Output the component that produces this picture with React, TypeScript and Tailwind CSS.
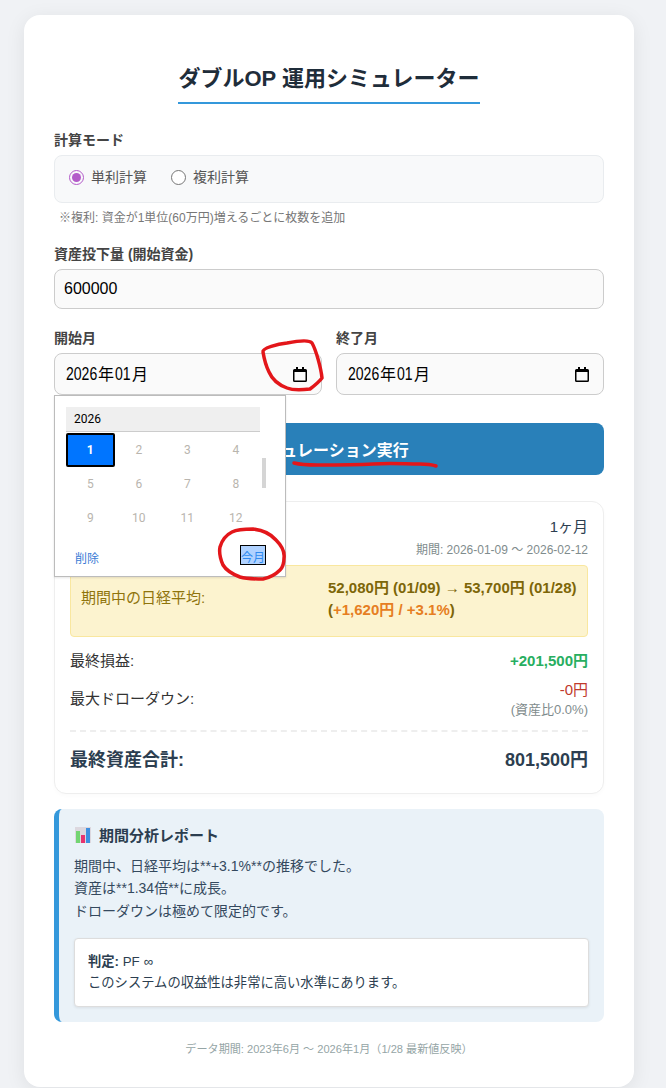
const months = [1, 2, 3, 4, 5, 6, 7, 8, 9, 10, 11, 12];

function CalendarIcon() {
  return (
    <svg width="14" height="15" viewBox="0 0 14 15" className="shrink-0">
      <path d="M3 0h2v2h4V0h2v2h1.5A1.5 1.5 0 0 1 14 3.5v10a1.5 1.5 0 0 1-1.5 1.5h-11A1.5 1.5 0 0 1 0 13.500v-10A1.5 1.5 0 0 1 1.500 2H3z" fill="#000" />
      <rect x="1.5" y="5" width="11" height="8.5" fill="#fafafa" />
    </svg>
  );
}

function MonthInput() {
  return (
    <div className="flex h-[42px] items-center justify-between rounded-lg border border-[#ccc] bg-[#fafafa] pl-[11px] pr-[14px]">
      <span className="flex items-baseline text-[16px] leading-[20px] text-black">
        <span className="inline-block w-[32px] origin-left scale-x-[0.78] text-[18px]">2026</span>
        <span>年</span>
        <span className="ml-[1px] inline-block w-[17px] origin-left scale-x-[0.78] text-[18px]">01</span>
        <span>月</span>
      </span>
      <CalendarIcon />
    </div>
  );
}

export default function App() {
  return (
    <div className="relative h-[1088px] w-[666px] overflow-hidden bg-[#f0f2f5] pl-[24px] pt-[15px] font-['Liberation_Sans','Noto_Sans_CJK_JP',sans-serif]">
      <div className="w-[610px] rounded-2xl bg-white px-[30px] pb-[30px] pt-[47px] shadow-[0_4px_20px_rgba(0,0,0,0.08)]">
        <div className="flex justify-center">
          <h1 className="border-b-2 border-[#3498db] pb-[6px] text-[22px] font-bold leading-[34px] text-[#1f2d3a]">
            ダブルOP 運用シミュレーター
          </h1>
        </div>

        {/* Mode */}
        <div className="mt-[26px] text-[14px] font-bold leading-[20px] text-[#444]">計算モード</div>
        <div className="mt-[5px] h-[48px] rounded-lg border border-[#e9ecef] bg-[#f8f9fa] pl-[14px] pt-[11px]">
          <div className="flex items-center gap-[24px] text-[14px] leading-[20px] text-[#555]">
            <div className="flex items-center gap-[7px]">
              <span className="flex h-[15px] w-[15px] items-center justify-center rounded-full border-[1.5px] border-[#b35bc9]">
                <span className="h-[9px] w-[9px] rounded-full bg-[#b35bc9]" />
              </span>
              単利計算
            </div>
            <div className="flex items-center gap-[7px]">
              <span className="h-[15px] w-[15px] rounded-full border border-[#767676] bg-white" />
              複利計算
            </div>
          </div>
        </div>
        <div className="ml-[5px] mt-[7px] text-[12px] leading-[16px] text-[#777]">
          ※複利: 資金が1単位(60万円)増えるごとに枚数を追加
        </div>

        {/* Capital */}
        <div className="mt-[18px] text-[14px] font-bold leading-[20px] text-[#444]">資産投下量 (開始資金)</div>
        <div className="mt-[5px] flex h-[40px] items-center rounded-lg border border-[#ccc] bg-[#fafafa] pl-[9px] text-[16px] text-black">
          600000
        </div>

        {/* Months */}
        <div className="mt-[19px] grid grid-cols-2 gap-[14px]">
          <div>
            <div className="text-[14px] font-bold leading-[20px] text-[#444]">開始月</div>
            <div className="mt-[5px]">
              <MonthInput />
            </div>
          </div>
          <div>
            <div className="text-[14px] font-bold leading-[20px] text-[#444]">終了月</div>
            <div className="mt-[5px]">
              <MonthInput />
            </div>
          </div>
        </div>

        <button className="mt-[28px] flex h-[52px] w-full items-center justify-center rounded-lg bg-[#2980b9] pt-[3px] text-[16px] font-bold text-white">
          シミュレーション実行
        </button>

        {/* Results */}
        <div className="mt-[26px] h-[293px] rounded-xl border border-[#eee] bg-white px-[15px] pt-[13px] shadow-[0_2px_4px_rgba(0,0,0,0.02)]">
          <div className="text-right text-[15px] leading-[24px] text-[#2c3e50]">1ヶ月</div>
          <div className="mt-[2px] text-right text-[12px] leading-[18px] text-[#7f8c8d]">期間: 2026-01-09 〜 2026-02-12</div>
          <div className="mt-[6px] flex h-[72px] items-center justify-between rounded border border-[#f9e79f] bg-[#fcf3cf] pb-[5px] pl-[10px] pr-[10px] text-[15px]">
            <span className="text-[#8f740c]">期間中の日経平均:</span>
            <div className="w-[249px] whitespace-nowrap font-bold leading-[22px] text-[#7d6608]">
              52,080円 (01/09) → 53,700円 (01/28)
              <br />
              (<span className="text-[#e67e22]">+1,620円 / +3.1%</span>)
            </div>
          </div>
          <div className="mt-[13px] flex items-center justify-between">
            <span className="text-[15px] text-[#333]">最終損益:</span>
            <span className="text-[15px] font-bold leading-[20px] text-[#27ae60]">+201,500円</span>
          </div>
          <div className="mt-[7px] flex items-center justify-between">
            <span className="text-[15px] text-[#333]">最大ドローダウン:</span>
            <div className="text-right">
              <div className="text-[15px] leading-[20px] text-[#c0392b]">-0円</div>
              <div className="text-[13px] leading-[19px] text-[#7f8c8d]">(資産比0.0%)</div>
            </div>
          </div>
          <div className="mt-[11px] border-t-2 border-dashed border-[#eee] pt-[16px]">
            <div className="flex items-center justify-between text-[18px] font-bold leading-[24px] text-[#2c3e50]">
              <span>最終資産合計:</span>
              <span>801,500円</span>
            </div>
          </div>
        </div>

        {/* Report */}
        <div className="mt-[15px] h-[213px] rounded-lg border-l-[5px] border-[#3498db] bg-[#eaf2f8] pl-[15px] pr-[15px] pt-[15px]">
          <div className="flex items-center gap-[7px] text-[15px] font-bold leading-[24px] text-[#2c3e50]">
            <svg width="17" height="17" viewBox="0 0 17 17" className="ml-px -mt-[2px]">
              <rect x="0" y="0" width="16" height="16" fill="#dcd8df" />
              <rect x="1" y="4" width="4" height="12" fill="#72d572" />
              <rect x="6" y="8" width="4" height="8" fill="#e8336f" />
              <rect x="11" y="1" width="4" height="15" fill="#3d8fe0" />
            </svg>
            期間分析レポート
          </div>
          <div className="mt-[7px] text-[14px] leading-[22.4px] text-[#34495e]">
            期間中、日経平均は**+3.1%**の推移でした。
            <br />
            資産は**1.34倍**に成長。
            <br />
            ドローダウンは極めて限定的です。
          </div>
          <div className="mt-[16px] h-[69px] rounded border border-[#ddd] bg-white px-[13px] pt-[12px] text-[13.3px] leading-[21px] text-[#2c3e50] shadow-[0_1px_3px_rgba(0,0,0,0.08)]">
            <strong>判定:</strong> PF ∞
            <br />
            このシステムの収益性は非常に高い水準にあります。
          </div>
        </div>

        <div className="mt-[19px] text-center text-[11.1px] leading-[16px] text-[#95a5a6]">
          データ期間: 2023年6月 〜 2026年1月（1/28 最新値反映）
        </div>
      </div>

      {/* Native month picker popup */}
      <div className="absolute left-[54px] top-[395px] h-[182px] w-[232px] border border-[#bcbcbc] bg-white pl-[11px] pt-[11px] font-['Roboto','Noto_Sans_CJK_JP',sans-serif] shadow-[0_1px_2px_rgba(0,0,0,0.1)]">
        <div className="flex h-[25px] w-[194px] items-center border-b border-[#ccc] bg-[#efefef] pl-[8px] text-[12px] text-black">2026</div>
        <div className="mt-px grid w-[194px] grid-cols-4 gap-y-0">
          {months.map((m) => (
            <div
              key={m}
              className={
                m === 1
                  ? "flex h-[34px] items-center justify-center rounded-[2px] border-2 border-black bg-[#0075ff] text-[12px] font-bold text-white"
                  : "flex h-[34px] items-center justify-center text-[12px] text-[#b9b5ae]"
              }
            >
              {m}
            </div>
          ))}
        </div>
        <div className="absolute left-[207px] top-[62px] h-[30px] w-[4px] bg-[#d5d5d5]" />
        <div className="absolute left-[20px] top-[155px] text-[12px] leading-[16px] text-[#3a7bd5]">削除</div>
        <div className="absolute left-[185px] top-[149px] h-[20px] w-[26px] border border-black bg-[#b0d2ff] pt-[4px] text-center text-[12px] leading-[16px] text-[#2f8bf0]">
          今月
        </div>
      </div>

      {/* Red pen marks drawn over the screenshot */}
      <svg className="pointer-events-none absolute left-0 top-0" width="666" height="1088" fill="none" stroke="#e3161a" strokeLinecap="round" strokeLinejoin="round" strokeWidth="3.5">
        <path d="M263 352C262 348 278 344 287 343C297 341 309 339 312 343C316 350 321 368 322 378C319 382 314 386 310 389C302 390 292 390 287 388C279 385 272 379 269 372C266 366 264 358 263 352Z" />
        <path d="M253 529C262 530 270 533 276 540C281 545 285 551 284 558C284 563 283 567 280 570C274 576 268 578 263 579C256 579 247 579 240 577C232 574 226 570 223 565C220 558 219 552 220 547C222 540 226 535 232 532C238 529 247 529 253 529Z" />
        <path d="M294 463C302 465 310 465 317 465C337 465 355 465 373 464C390 463 405 464 420 464C428 464 433 465 436 466" />
      </svg>
    </div>
  );
}
